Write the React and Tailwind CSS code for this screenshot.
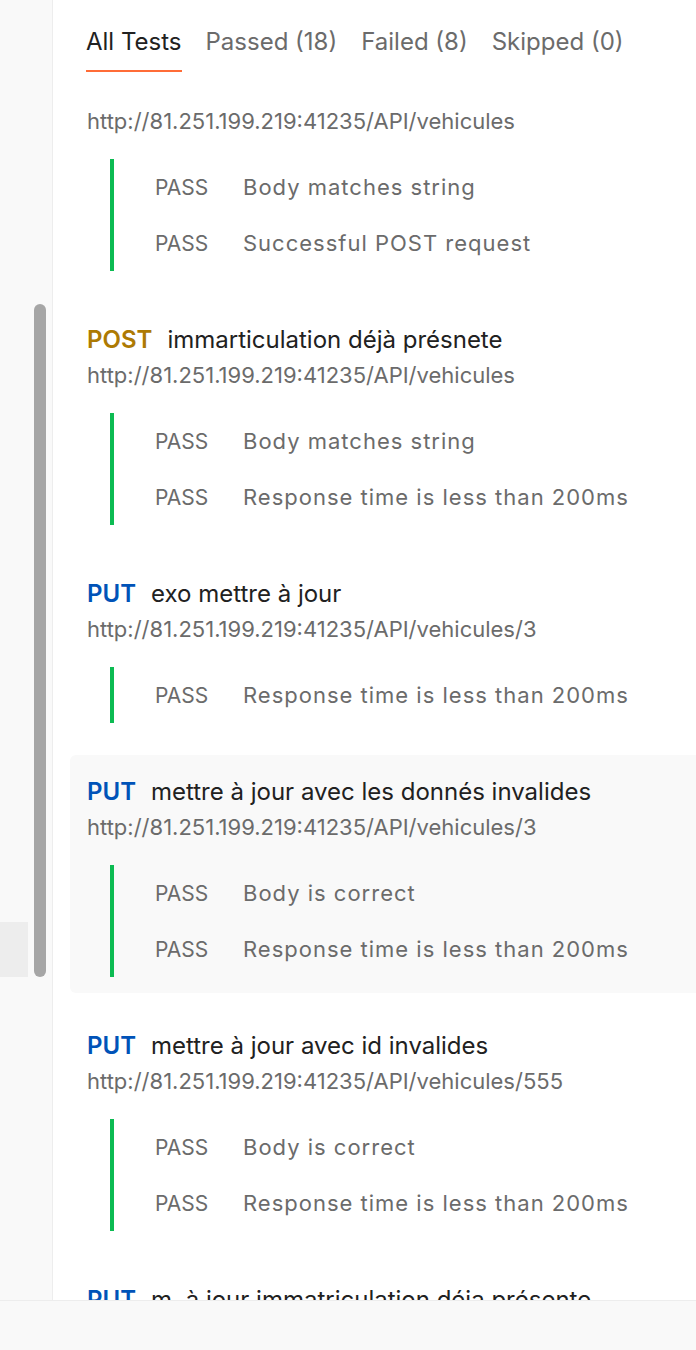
import React from "react";

const items = [
  {
    hideName: true,
    method: "POST",
    name: "",
    url: "http://81.251.199.219:41235/API/vehicules",
    tests: ["Body matches string", "Successful POST request"],
  },
  {
    method: "POST",
    name: "immarticulation déjà présnete",
    url: "http://81.251.199.219:41235/API/vehicules",
    tests: ["Body matches string", "Response time is less than 200ms"],
  },
  {
    method: "PUT",
    name: "exo mettre à jour",
    url: "http://81.251.199.219:41235/API/vehicules/3",
    tests: ["Response time is less than 200ms"],
  },
  {
    method: "PUT",
    name: "mettre à jour avec les donnés invalides",
    url: "http://81.251.199.219:41235/API/vehicules/3",
    tests: ["Body is correct", "Response time is less than 200ms"],
    active: true,
  },
  {
    method: "PUT",
    name: "mettre à jour avec id invalides",
    url: "http://81.251.199.219:41235/API/vehicules/555",
    tests: ["Body is correct", "Response time is less than 200ms"],
  },
  {
    method: "PUT",
    name: "m. à jour immatriculation déja présente",
    url: "http://81.251.199.219:41235/API/vehicules/7",
    tests: ["Body is correct", "Response time is less than 200ms"],
  },
];

function Item({ item }) {
  const methodColor = item.method === "POST" ? "text-[#ad7a03]" : "text-[#0053b8]";
  return (
    <div
      className={
        "rounded-l-[6px] px-[17px] pt-[16px] pb-[16px] " +
        (item.active ? "bg-[#f9f9f9]" : "bg-white")
      }
    >
      {!item.hideName && (
        <div className="flex items-center h-[40px] pt-[1px] text-[24px] leading-[40px] whitespace-nowrap">
          <span className={"font-semibold mr-[15px] " + methodColor}>{item.method}</span>
          <span className="text-[#212121]">{item.name}</span>
        </div>
      )}
      <div className="h-[32px] leading-[32px] text-[22px] text-[#6b6b6b] whitespace-nowrap">
        {item.url}
      </div>
      <div className="mt-[22px] ml-[23px] border-l-[4px] border-[#0cbb52] pl-[41px]">
        {item.tests.map((t, i) => (
          <div key={i} className="flex items-center h-[56px] pt-[1px] text-[#6b6b6b] whitespace-nowrap">
            <span className="w-[88px] shrink-0 text-[21px]">PASS</span>
            <span className="text-[22px] tracking-[1px]">{t}</span>
          </div>
        ))}
      </div>
    </div>
  );
}

export default function App() {
  const tabs = [
    { label: "All Tests", active: true },
    { label: "Passed (18)" },
    { label: "Failed (8)" },
    { label: "Skipped (0)" },
  ];
  return (
    <div
      className="w-[696px] h-[1350px] flex flex-col overflow-hidden bg-white"
      style={{ fontFamily: "Inter, 'Noto Sans', sans-serif" }}
    >
      <div className="flex h-[1300px] overflow-hidden">
        {/* sidebar */}
        <div className="w-[53px] shrink-0 bg-[#f9f9f9] border-r border-[#ededed] flex gap-[6px]">
          <div className="w-[28px] pt-[922px]">
            <div className="h-[55px] bg-[#ededed]" />
          </div>
          <div className="w-[12px] pt-[304px]">
            <div className="h-[673px] rounded-full bg-[#a6a6a6]" />
          </div>
        </div>
        {/* main */}
        <div className="flex-1 flex flex-col overflow-hidden">
          <div className="h-[89px] shrink-0 bg-white flex items-start pl-[33px] gap-[24px]">
            {tabs.map((t) => (
              <div
                key={t.label}
                className={
                  "pt-[25px] pb-[11px] text-[24px] leading-[34px] whitespace-nowrap border-b-2 " +
                  (t.active
                    ? "text-[#212121] border-[#ff6c37]"
                    : "text-[#6b6b6b] border-transparent")
                }
              >
                {t.label}
              </div>
            ))}
          </div>
          <div className="pl-[17px] flex flex-col gap-[16px]">
            {items.map((it, i) => (
              <Item key={i} item={it} />
            ))}
          </div>
        </div>
      </div>
      <div className="h-[50px] shrink-0 bg-[#f9f9f9] border-t border-[#ededed]" />
    </div>
  );
}
